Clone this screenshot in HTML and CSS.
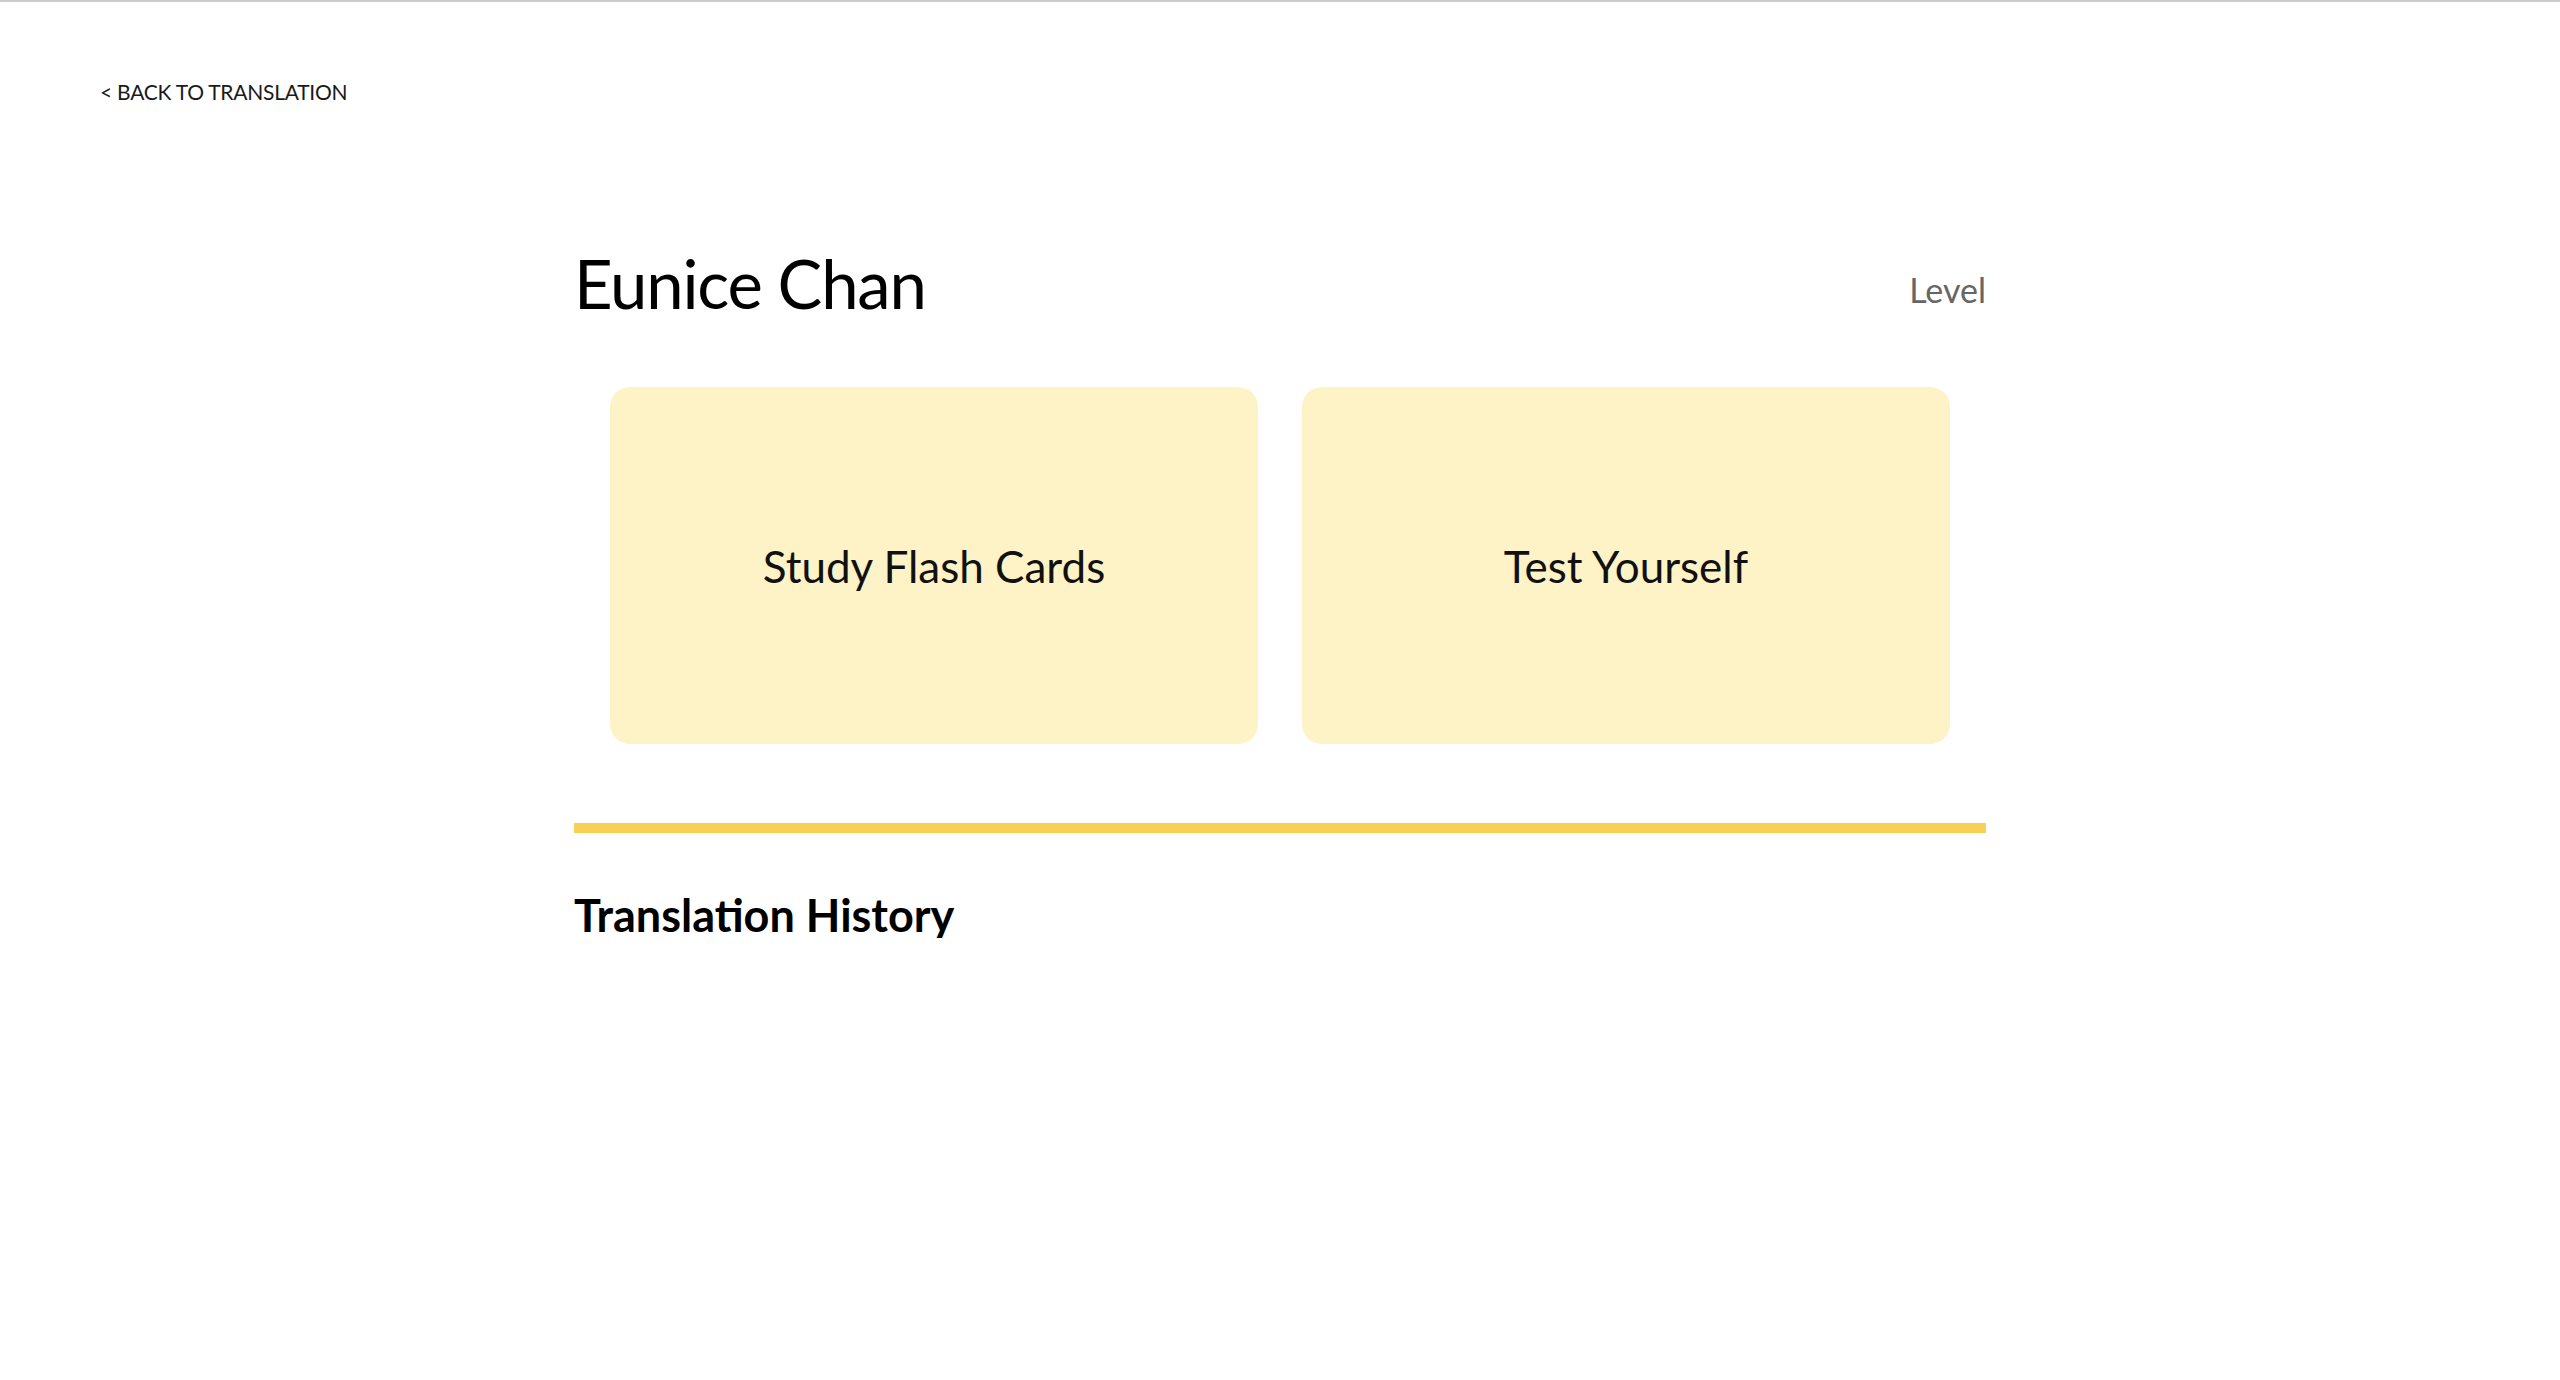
FILE: index.html
```html
<!DOCTYPE html>
<html>
<head>
<meta charset="utf-8">
<title>Eunice Chan</title>
<link rel="stylesheet" href="styles.css">
</head>
<body>
<div class="topline"></div>
<nav class="nav"><a class="back" href="#">&lt; BACK TO TRANSLATION</a></nav>
<main class="main">
  <header class="profile-head">
    <h1 class="name">Eunice Chan</h1>
    <span class="level">Level</span>
  </header>
  <section class="cards">
    <div class="card">Study Flash Cards</div>
    <div class="card">Test Yourself</div>
  </section>
  <div class="divider"></div>
  <h2 class="history">Translation History</h2>
</main>
</body>
</html>
```
FILE: styles.css
```css
html, body {
  margin: 0;
  padding: 0;
  background: #ffffff;
}
body {
  font-family: Lato, "Open Sans", sans-serif;
  color: #000;
}
.topline {
  height: 2px;
  background: #cccccc;
}
.nav {
  padding: 79px 0 0 100px;
}
.back {
  display: inline-block;
  font-size: 21px;
  line-height: 21px;
  letter-spacing: -0.25px;
  color: #1a1a1a;
  text-decoration: none;
}
.main {
  width: 1412px;
  margin: 146px auto 0;
}
.profile-head {
  display: flex;
  justify-content: space-between;
  align-items: flex-start;
}
.name {
  margin: 0;
  font-size: 67px;
  line-height: 68px;
  font-weight: 400;
  letter-spacing: -1.2px;
}
.level {
  margin-top: 24px;
  font-size: 34px;
  line-height: 34px;
  color: #666666;
}
.cards {
  display: flex;
  gap: 44px;
  padding: 0 36px;
  margin-top: 70px;
}
.card {
  flex: 1;
  height: 357px;
  background: #fef3c6;
  border-radius: 20px;
  display: flex;
  align-items: center;
  justify-content: center;
  font-size: 44px;
  line-height: 44px;
  color: #111111;
}
.divider {
  height: 10px;
  background: #f6d154;
  margin-top: 79px;
}
.history {
  margin: 60px 0 0;
  font-size: 45px;
  line-height: 45px;
  font-weight: 700;
}
```
